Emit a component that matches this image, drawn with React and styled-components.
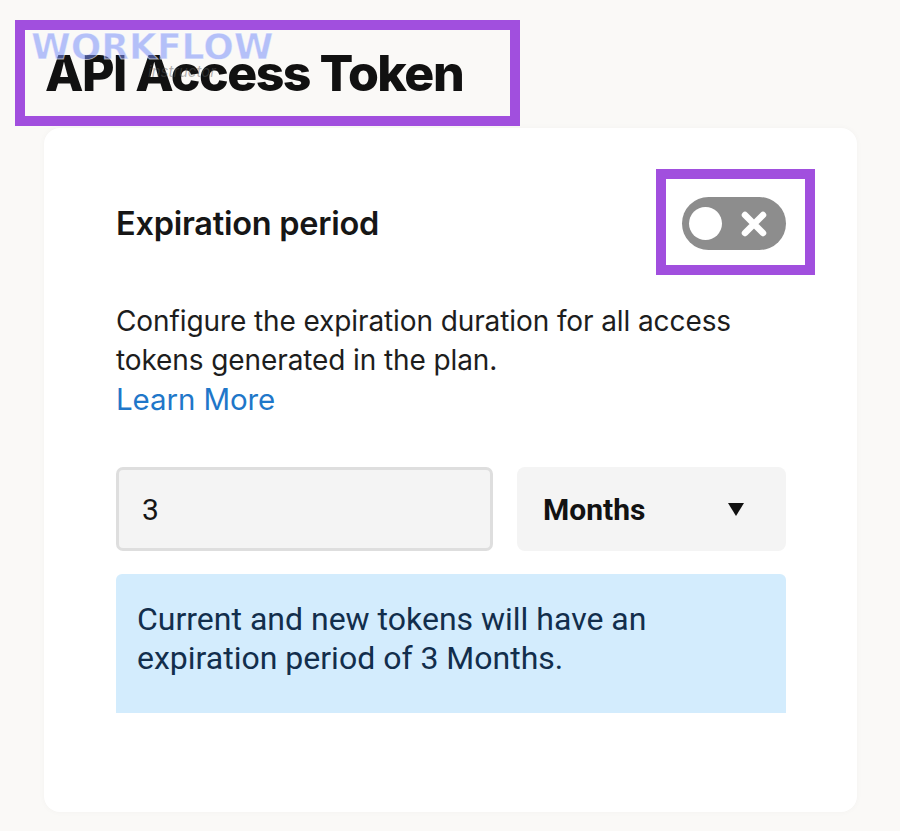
import React from "react";
import styled, { createGlobalStyle } from "styled-components";

const Global = createGlobalStyle`
  html, body { margin: 0; padding: 0; background: #faf9f7; }
  body { font-family: "Inter", "Noto Sans", sans-serif; color: #1c1c1c; }
  * { box-sizing: border-box; }
`;

const Page = styled.div`
  width: 900px;
  height: 831px;
  padding: 20px 0 0 15px;
  display: flex;
  flex-direction: column;
  overflow: hidden;
`;

const HeaderBox = styled.header`
  position: relative;
  width: 505px;
  height: 106px;
  border: 10px solid #a14fde;
  display: flex;
  align-items: center;
  padding-left: 20px;
`;

const Title = styled.h1`
  margin: 0;
  font-family: "Inter", sans-serif;
  font-weight: 800;
  font-size: 50px;
  letter-spacing: -1.5px;
  color: #111;
  line-height: 1;
`;

const Watermark = styled.div`
  position: absolute;
  left: 6px;
  top: -1px;
  font-family: "DejaVu Sans", sans-serif;
  font-weight: 700;
  font-size: 36px;
  color: rgba(120, 142, 250, 0.55);
  -webkit-text-stroke: 1px rgba(255, 255, 255, 0.6);
  pointer-events: none;
  line-height: 1;
`;

const WatermarkSub = styled.div`
  position: absolute;
  left: 123px;
  top: 32px;
  font-family: "Inter", sans-serif;
  font-style: italic;
  font-size: 15px;
  color: rgba(90, 90, 90, 0.45);
  pointer-events: none;
`;

const Card = styled.section`
  margin: 2px 0 0 29px;
  width: 813px;
  height: 684px;
  background: #fff;
  border-radius: 16px;
  box-shadow: 0 0 6px rgba(0, 0, 0, 0.03);
  padding: 69px 71px 0 72px;
  display: flex;
  flex-direction: column;
`;

const Row = styled.div`
  display: flex;
  align-items: center;
  justify-content: space-between;
`;

const Label = styled.h2`
  margin: 0;
  font-family: "Inter", sans-serif;
  font-weight: 600;
  font-size: 32.5px;
  letter-spacing: -0.25px;
  color: #161616;
`;

const ToggleWrap = styled.div`
  position: relative;
  &::after {
    content: "";
    position: absolute;
    left: -26px;
    right: -29px;
    top: -28px;
    bottom: -25px;
    border: 10px solid #a14fde;
    pointer-events: none;
  }
`;

const Toggle = styled.button`
  width: 104px;
  height: 53px;
  border-radius: 27px;
  border: none;
  background: #8d8d8d;
  display: flex;
  align-items: center;
  justify-content: space-between;
  padding: 0 18px 0 7px;
  cursor: pointer;
`;

const Knob = styled.span`
  width: 33px;
  height: 33px;
  border-radius: 50%;
  background: #fff;
`;

const Description = styled.p`
  margin: 52px 0 0;
  font-family: "Inter", sans-serif;
  font-size: 28px;
  line-height: 39px;
  color: #1d1d1d;
  letter-spacing: -0.1px;
`;

const Link = styled.a`
  color: #1f77c9;
  font-size: 29.5px;
  text-decoration: none;
`;

const Fields = styled.div`
  margin-top: 47px;
  display: grid;
  grid-template-columns: 377px 1fr;
  gap: 24px;
`;

const NumberInput = styled.div`
  height: 84px;
  background: #f4f4f4;
  border: 3px solid #dedede;
  border-radius: 7px;
  display: flex;
  align-items: center;
  padding-left: 23px;
  font-family: "Roboto", sans-serif;
  font-size: 30px;
  color: #151515;
`;

const Select = styled.div`
  height: 84px;
  background: #f4f4f4;
  border-radius: 8px;
  display: flex;
  align-items: center;
  justify-content: space-between;
  padding: 0 42px 0 26px;
  font-family: "Roboto", sans-serif;
  font-weight: 700;
  font-size: 30px;
  color: #121212;
`;

const Info = styled.div`
  margin-top: 23px;
  height: 139px;
  background: #d3ecfd;
  border-radius: 6px 6px 0 0;
  padding: 26px 21px 0;
  font-family: "Roboto", sans-serif;
  font-size: 32px;
  line-height: 39px;
  color: #122e4c;
`;

export default function App() {
  return (
    <>
      <Global />
      <Page>
        <HeaderBox>
          <Title>API Access Token</Title>
          <Watermark>WORKFLOW</Watermark>
          <WatermarkSub>instructor</WatermarkSub>
        </HeaderBox>
        <Card>
          <Row>
            <Label>Expiration period</Label>
            <ToggleWrap>
              <Toggle aria-label="Toggle expiration">
                <Knob />
                <svg width="28" height="28" viewBox="0 0 28 28">
                  <path
                    d="M5 5 L23 23 M23 5 L5 23"
                    stroke="#fff"
                    strokeWidth="6.5"
                    strokeLinecap="round"
                  />
                </svg>
              </Toggle>
            </ToggleWrap>
          </Row>
          <Description>
            Configure the expiration duration for all access
            <br />
            tokens generated in the plan.
            <br />
            <Link href="#">Learn More</Link>
          </Description>
          <Fields>
            <NumberInput>3</NumberInput>
            <Select>
              <span>Months</span>
              <svg width="16" height="13" viewBox="0 0 16 13">
                <polygon points="0,0 16,0 8,13" fill="#111" />
              </svg>
            </Select>
          </Fields>
          <Info>
            Current and new tokens will have an
            <br />
            expiration period of 3 Months.
          </Info>
        </Card>
      </Page>
    </>
  );
}
